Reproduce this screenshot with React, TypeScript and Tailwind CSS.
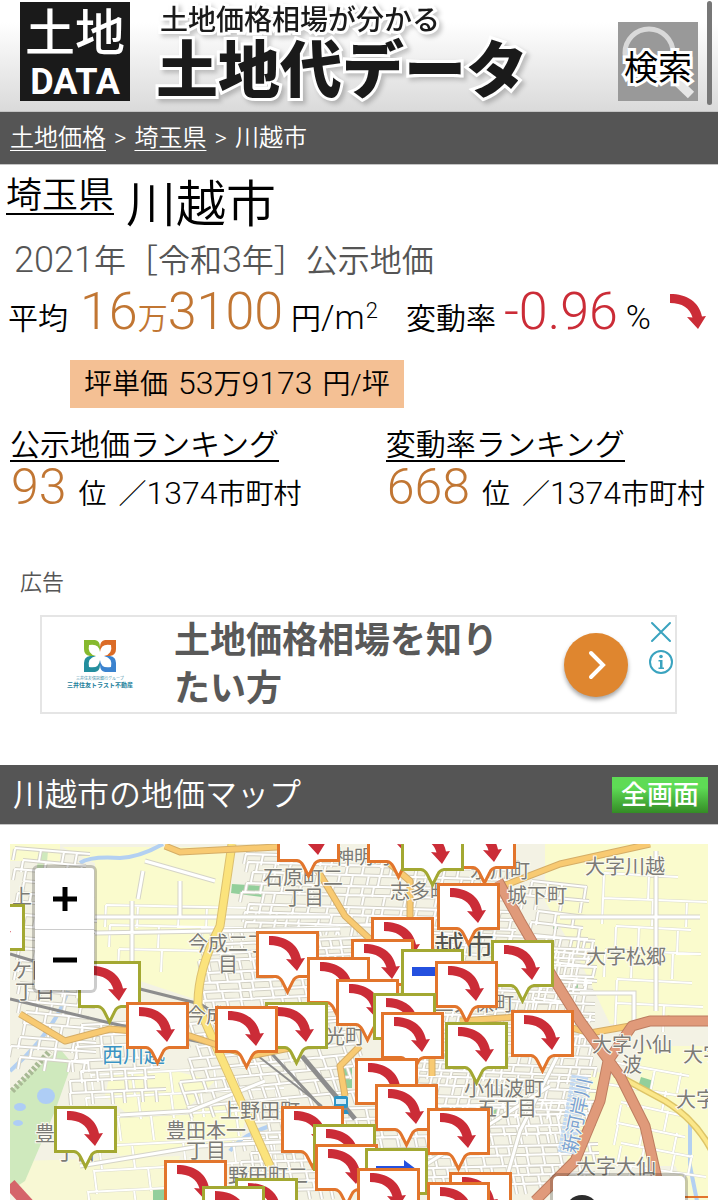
import React from "react";

type MarkerKind = "down" | "flat" | "up";
type Marker = { x: number; y: number; tone: "orange" | "green"; kind?: MarkerKind };

const MAP_X = 10;
const MAP_Y = 843;

const markers: Marker[] = [
  { x: 277, y: 814, tone: "orange" },
  { x: 367, y: 815, tone: "orange" },
  { x: 453, y: 821, tone: "orange" },
  { x: 401, y: 823, tone: "green" },
  { x: 437, y: 882, tone: "orange" },
  { x: -38, y: 903, tone: "green" },
  { x: 371, y: 916, tone: "orange" },
  { x: 256, y: 930, tone: "orange" },
  { x: 351, y: 938, tone: "orange" },
  { x: 491, y: 939, tone: "green" },
  { x: 401, y: 948, tone: "green", kind: "flat" },
  { x: 307, y: 956, tone: "orange" },
  { x: 78, y: 960, tone: "green" },
  { x: 435, y: 960, tone: "orange" },
  { x: 336, y: 978, tone: "orange" },
  { x: 373, y: 992, tone: "green" },
  { x: 265, y: 1001, tone: "green" },
  { x: 126, y: 1001, tone: "orange" },
  { x: 215, y: 1005, tone: "orange" },
  { x: 511, y: 1009, tone: "orange" },
  { x: 381, y: 1011, tone: "orange" },
  { x: 445, y: 1021, tone: "green" },
  { x: 355, y: 1057, tone: "orange" },
  { x: 375, y: 1083, tone: "orange" },
  { x: 54, y: 1105, tone: "green" },
  { x: 281, y: 1105, tone: "orange" },
  { x: 427, y: 1107, tone: "orange" },
  { x: 313, y: 1123, tone: "green" },
  { x: 315, y: 1143, tone: "orange" },
  { x: 365, y: 1147, tone: "green", kind: "up" },
  { x: 164, y: 1159, tone: "orange" },
  { x: 357, y: 1167, tone: "orange" },
  { x: 449, y: 1171, tone: "orange" },
  { x: 235, y: 1177, tone: "green" },
  { x: 427, y: 1181, tone: "orange" },
  { x: 202, y: 1185, tone: "green" },
];

const ARROW = "M0 0C17 0 29 8 32 22.5L36 22L28 35L17 23L22.5 23.5C20 14 12 9 0 9Z";

function DownArrow({ className }: { className: string }) {
  return (
    <svg viewBox="0 0 36 35" className={className} aria-hidden="true">
      <path d={ARROW} fill="#cb2c37" />
    </svg>
  );
}

function Pin({ marker }: { marker: Marker }) {
  const kind = marker.kind ?? "down";
  return (
    <button
      type="button"
      aria-label="地価地点"
      className="absolute block h-16 w-16 cursor-pointer"
      style={{ left: marker.x - MAP_X, top: marker.y - MAP_Y }}
    >
      <svg viewBox="0 0 64 64" className="block h-16 w-16">
        <path
          d="M1.5 1.5H61.5V45.5H43Q38.500 46 36.500 51L31.500 61L26.500 51Q24 46 20 45.500H1.500Z"
          fill="#fff"
          stroke={marker.tone === "orange" ? "#e2752c" : "#a3a832"}
          strokeWidth="3"
        />
        {kind === "down" && <path d={ARROW} transform="translate(13 5)" fill="#cb2c37" />}
        {kind === "flat" && <rect x="11" y="18" width="40" height="9" fill="#2450df" />}
        {kind === "up" && <path d="M11 18H39V12L51 21L39 30V25H11Z" fill="#2450df" />}
      </svg>
    </button>
  );
}

/* Street grid: rows of short blocks, slightly skewed per district. */
function streets(x0: number, y0: number, x1: number, y1: number, dx: number, dy: number, skew: number, seed: number) {
  let d = "";
  let s = seed;
  const rnd = () => {
    s = (s * 9301 + 49297) % 233280;
    return s / 233280;
  };
  for (let y = y0; y < y1; y += dy) {
    const a = x0 + rnd() * dx;
    const b = x1 - rnd() * dx;
    const t = y + rnd() * 4;
    d += `M${a.toFixed(0)} ${t.toFixed(0)}L${b.toFixed(0)} ${(t + skew).toFixed(0)}`;
    for (let x = a; x < b; x += dx * (0.6 + rnd() * 0.9)) {
      const o = ((x - x0) / (x1 - x0)) * skew;
      d += `M${x.toFixed(0)} ${(t + o).toFixed(0)}l${(-skew * 0.25).toFixed(0)} ${dy}`;
    }
  }
  return d;
}

const fieldStreets = [
  streets(95, 900, 260, 965, 34, 22, 3, 3),
  streets(70, 1070, 300, 1200, 40, 24, -10, 8),
  streets(590, 870, 708, 1010, 34, 26, 4, 5),
  streets(600, 1060, 708, 1180, 26, 20, 14, 6),
].join("");

const townStreets = [
  streets(10, 846, 100, 1060, 18, 11, 6, 1),
  streets(195, 930, 400, 1030, 15, 10, -9, 2),
  streets(240, 850, 520, 930, 15, 10, 8, 4),
  streets(180, 1020, 360, 1110, 17, 12, -16, 9),
  streets(240, 1110, 600, 1200, 13, 10, -9, 7),
  streets(400, 930, 600, 1110, 13, 9, 7, 11),
  streets(520, 880, 600, 1030, 18, 13, 6, 12),
  streets(70, 1020, 170, 1100, 17, 12, -4, 13),
].join("");

const labels: { x: number; y: number; t: string; s?: number }[] = [
  { x: 335, y: 863, t: "神明町", s: 19 },
  { x: 263, y: 884, t: "石原町二" },
  { x: 284, y: 904, t: "丁目" },
  { x: 390, y: 898, t: "志多町" },
  { x: 470, y: 877, t: "氷川町" },
  { x: 507, y: 902, t: "城下町" },
  { x: 585, y: 873, t: "大字川越" },
  { x: 586, y: 963, t: "大字松郷" },
  { x: 188, y: 950, t: "今成二丁" },
  { x: 218, y: 971, t: "目" },
  { x: 12, y: 903, t: "上" },
  { x: 12, y: 977, t: "ケ関" },
  { x: 15, y: 998, t: "丁目" },
  { x: 186, y: 1022, t: "今成" },
  { x: 325, y: 1043, t: "光町" },
  { x: 220, y: 1117, t: "上野田町" },
  { x: 166, y: 1137, t: "豊田本一" },
  { x: 186, y: 1157, t: "丁目" },
  { x: 35, y: 1140, t: "豊田" },
  { x: 56, y: 1159, t: "丁目" },
  { x: 228, y: 1182, t: "野田町二" },
  { x: 434, y: 1010, t: "三久保町" },
  { x: 464, y: 1095, t: "小仙波町" },
  { x: 477, y: 1115, t: "五丁目" },
  { x: 592, y: 1051, t: "大字小仙" },
  { x: 622, y: 1071, t: "波" },
  { x: 683, y: 1061, t: "大字" },
  { x: 676, y: 1106, t: "大字" },
  { x: 576, y: 1173, t: "大字大仙" },
];

function MapTiles() {
  return (
    <svg
      viewBox="10 843 698 357"
      preserveAspectRatio="xMinYMin slice"
      className="absolute inset-0 h-full w-full"
      aria-hidden="true"
    >
      <rect x="10" y="843" width="698" height="357" fill="#f3f2e4" />
      {/* fields */}
      <g fill="#fafbcd">
        <path d="M62 846H235L215 930H95V862Z" />
        <path d="M95 932H215L200 1000L95 965Z" />
        <path d="M110 1073L175 1070L215 1080L180 1115H130L105 1095Z" />
        <path d="M90 1115L250 1100L240 1140L120 1155Z" />
        <path d="M20 1160L180 1155L170 1200H20Z" opacity=".7" />
        <path d="M545 843H708V1023H610L580 960L545 900Z" />
        <path d="M640 1045H708V1200H690L640 1080Z" />
        <path d="M592 1070L640 1080L680 1165H565Z" />
        <path d="M10 843H60V860H10Z" />
      </g>
      {/* parks and water */}
      <g fill="#cfe9bd">
        <path d="M10 1090L60 1048L72 1062L55 1110L25 1180L10 1190Z" />
        <path d="M40 850L48 850L46 872L36 870Z" />
      </g>
      <g fill="#93cf9b">
        <path d="M232 883L264 885L262 896L231 892Z" />
        <path d="M641 1076L654 1080L650 1090L638 1086Z" />
        <path d="M573 978h5v10h-5zM343 1066h9v21h-9zM153 1187h12v13h-12zM492 1110l8-4v14l-9 2zM553 923h5v5h-5z" />
      </g>
      <g fill="#aecdf5">
        <ellipse cx="46" cy="1095" rx="9" ry="8" />
        <ellipse cx="20" cy="1106" rx="6" ry="4" />
        <ellipse cx="18" cy="1122" rx="5" ry="3" />
      </g>
      <path d="M12 1090L32 1070L50 1050" stroke="#a9ba95" strokeWidth="6" strokeDasharray="3 2" fill="none" />
      <path d="M80 862Q90 855 120 857Q140 856 163 843M68 990Q55 1030 10 1070M230 1150Q240 1135 270 1125M690 1120V1165L697 1200" stroke="#b3d0f2" strokeWidth="4" fill="none" />
      {/* minor streets */}
      <path d={fieldStreets} stroke="#dcdccb" strokeWidth="3" fill="none" />
      <path d={fieldStreets} stroke="#fff" strokeWidth="2" fill="none" />
      <path d={townStreets} stroke="#d3d1c5" strokeWidth="4" fill="none" />
      <path d={townStreets} stroke="#fff" strokeWidth="2" fill="none" />
      <g stroke="#d5d4c8" strokeWidth="5" fill="none">
        <path d="M95 916H330M95 932L340 928M132 900V965M143 870L138 898M145 860L215 880M180 880V915M560 916H700M656 850V1010M580 992H634V1023M120 1114L190 1110L265 1080M80 1165L200 1145L300 1140M500 1200L520 1130L560 1050M400 1180L550 1085" />
      </g>
      <g stroke="#fff" strokeWidth="3" fill="none">
        <path d="M95 916H330M95 932L340 928M132 900V965M143 870L138 898M145 860L215 880M180 880V915M560 916H700M656 850V1010M580 992H634V1023M120 1114L190 1110L265 1080M80 1165L200 1145L300 1140M500 1200L520 1130L560 1050M400 1180L550 1085" />
      </g>
      {/* railways */}
      <g stroke="#8d8d8d" fill="none">
        <path d="M10 953L40 962M120 983L200 1003L260 1040L320 1105" strokeWidth="3" />
        <path d="M10 998L110 1022L205 1042" strokeWidth="3" />
        <path d="M302 1055L355 1118" strokeWidth="5" />
        <path d="M258 1055L322 1105" strokeWidth="2" />
      </g>
      {/* yellow and orange roads */}
      <g fill="none" strokeLinejoin="round">
        <path d="M232 843L220 925Q197 970 198 1005L225 1065L270 1165" stroke="#dcc070" strokeWidth="9" />
        <path d="M232 843L220 925Q197 970 198 1005L225 1065L270 1165" stroke="#fbe37c" strokeWidth="7" />
        <path d="M20 1013L65 1040L110 1028L190 1035L250 1055L300 1045M165 845L180 851L277 846M318 870L345 915L372 940M375 850L410 880V935M495 888L560 863L650 843M345 1095L340 1065L360 1045M432 1075V1050M460 1020L530 1015L590 1032L670 1018" stroke="#d5ad66" strokeWidth="7" />
        <path d="M20 1013L65 1040L110 1028L190 1035L250 1055L300 1045M165 845L180 851L277 846M318 870L345 915L372 940M375 850L410 880V935M495 888L560 863L650 843M345 1095L340 1065L360 1045M432 1075V1050M460 1020L530 1015L590 1032L670 1018" stroke="#f8ca72" strokeWidth="5" />
        <path d="M615 1073L665 1100Q695 1118 712 1150" stroke="#ddc467" strokeWidth="7" />
        <path d="M615 1073L665 1100Q695 1118 712 1150" stroke="#fbe789" strokeWidth="4" />
      </g>
      {/* trunk roads */}
      <g fill="none" strokeLinejoin="round">
        <path d="M498 880L520 920L555 980L580 1020L620 1075L645 1125L662 1200M535 1200L575 1160L600 1100L608 1060L632 1025L650 1020H708" stroke="#bd7d60" strokeWidth="11" />
        <path d="M498 880L520 920L555 980L580 1020L620 1075L645 1125L662 1200M535 1200L575 1160L600 1100L608 1060L632 1025L650 1020H708" stroke="#e09a7a" strokeWidth="9" />
        <path d="M10 1183L30 1205" stroke="#d5646a" strokeWidth="12" />
        <path d="M680 1196H708" stroke="#e2752c" strokeWidth="2" />
      </g>
      {/* river */}
      <path d="M580 1075L566 1152" stroke="#c3d9f2" strokeWidth="17" strokeDasharray="3 1" />
      <g
        fontFamily="'Noto Sans CJK JP', sans-serif"
        fontWeight="400"
        fill="#7b7b76"
        stroke="#fbfaf0"
        strokeWidth="2"
        paintOrder="stroke"
      >
        {labels.map((l) => (
          <text key={`${l.x}-${l.y}`} x={l.x} y={l.y} fontSize={l.s ?? 20}>
            {l.t}
          </text>
        ))}
        <text x="404" y="956" fontSize="30" fill="#55554f">川越市</text>
        <text x="102" y="1061" fontSize="21" fill="#3a93c4">西川越</text>
        <text transform="translate(576 1153) rotate(-78)" fontSize="19" fill="#7ba3d3">新河岸川</text>
      </g>
      <g fill="#2e94c5">
        <rect x="334" y="1095" width="14" height="12" rx="2" />
        <path d="M335 1109h12l2 4h-16z" />
      </g>
      <rect x="336" y="1098" width="10" height="5" fill="#d5edf7" />
    </svg>
  );
}

function AdLogo() {
  return (
    <svg viewBox="0 0 32 32" className="h-8 w-8" aria-hidden="true">
      <path d="M0 0H11Q16 1 16 7V16H6Q0 15 0 9Z" fill="#86b92e" />
      <path d="M32 0H21Q16 1 16 7V16H26Q32 15 32 9Z" fill="#db6b26" />
      <path d="M0 32H11Q16 31 16 25V16H6Q0 17 0 23Z" fill="#238e9e" />
      <path d="M32 32H21Q16 31 16 25V16H26Q32 17 32 23Z" fill="#3b83cf" />
      <path
        d="M5 5Q15 3 16 12Q17 3 27 5Q29 14 20 16Q29 18 27 27Q17 29 16 20Q15 29 5 27Q3 18 12 16Q3 14 5 5Z"
        fill="#fff"
      />
    </svg>
  );
}

function Ranking({ title, rank }: { title: string; rank: string }) {
  return (
    <div>
      <a href="#ranking" className="inline-block border-b-2 border-black pt-[2px] text-[30px] leading-[30px]">
        {title}
      </a>
      <p className="flex items-baseline pl-px text-[28px] leading-[50px] whitespace-nowrap">
        <span className="text-[50px] text-[#c17633]">{rank}</span>
        <span className="ml-3">位</span>
        <span className="ml-3">
          ／<span className="text-[32px]">1374</span>市町村
        </span>
      </p>
    </div>
  );
}

export default function App() {
  return (
    <div
      lang="ja"
      className="relative min-h-screen bg-white font-[Roboto,'Noto_Sans_CJK_JP',sans-serif] font-[350] text-black"
    >
      <header className="flex h-[111px] items-start bg-linear-to-b from-white from-20% to-[#dadada] px-5">
        <a
          href="#top"
          className="mt-[2px] flex h-[99px] w-[110px] shrink-0 flex-col items-center overflow-hidden bg-[#1a1a1a] text-white"
        >
          <span className="text-[50px] leading-[64px] font-medium">土地</span>
          <span className="text-[36px] leading-[32px] font-bold">DATA</span>
        </a>
        <div className="ml-[26px] flex flex-col pt-px whitespace-nowrap text-[#1a1a1a] drop-shadow-[3px_3px_2px_rgba(0,0,0,0.2)] [paint-order:stroke_fill] [-webkit-text-stroke:6px_white]">
          <span className="pl-1 text-[28px] leading-[40px] font-medium">土地価格相場が分かる</span>
          <span className="text-[62px] leading-[62px] font-black">土地代データ</span>
        </div>
        <button
          type="button"
          className="relative mt-[22px] ml-auto h-[79px] w-20 shrink-0 bg-[#999] text-[34px] leading-[79px] font-normal whitespace-nowrap"
        >
          <svg viewBox="0 0 80 79" className="absolute inset-0 h-full w-full" aria-hidden="true">
            <circle cx="31" cy="31" r="24" fill="none" stroke="#d9d9d9" strokeWidth="5" />
            <path d="M49 50L73 73" stroke="#e6e6e6" strokeWidth="9" />
          </svg>
          <span className="relative flex justify-center pt-2 leading-[76px] [paint-order:stroke_fill] [-webkit-text-stroke:6px_white]">
            検索
          </span>
        </button>
      </header>
      <div className="absolute top-px right-[6px] h-26 w-[5px] rounded-full bg-[#777]" />

      <nav className="flex h-[54px] items-center gap-2 border-y border-[#c4c4c4] bg-[#555] px-[10px] pb-px text-2xl text-white">
        <a href="#price" className="underline decoration-1 underline-offset-4">土地価格</a>
        <span>&gt;</span>
        <a href="#saitama" className="underline decoration-1 underline-offset-4">埼玉県</a>
        <span>&gt;</span>
        <span>川越市</span>
      </nav>

      <main>
        <h1 className="flex items-start pt-3 pl-[6px]">
          <a href="#saitama" className="border-b-2 border-black pt-[2px] text-4xl leading-[34px]">埼玉県</a>
          <span className="ml-3 text-[50px] leading-[56px]">川越市</span>
        </h1>
        <p className="pt-[5px] pl-[14px] text-[32px] leading-[44px] text-[#555]">
          <span className="text-[36px]">2021</span>年［令和<span className="text-[36px]">3</span>年］公示地価
        </p>

        <div className="flex items-baseline pl-2 text-[30px] leading-[58px] whitespace-nowrap">
          <span>平均</span>
          <span className="ml-3 text-[52px] text-[#c17633]">
            16<span className="text-[30px]">万</span>3100
          </span>
          <span className="ml-2">
            円<span className="text-[34px]">/m</span>
            <sup className="ml-px text-[22px] leading-none">2</sup>
          </span>
          <span className="ml-7">変動率</span>
          <span className="ml-2 text-[52px] text-[#cb2c37]">-0.96</span>
          <span className="ml-2 text-[34px]">%</span>
          <DownArrow className="mr-3 ml-auto h-[35px] w-9" />
        </div>

        <p className="mt-3 ml-[70px] flex w-fit items-baseline gap-[10px] bg-[#f4c094] px-[14px] text-[28px] leading-[47px] whitespace-nowrap">
          <span>坪単価</span>
          <span>
            <span className="text-[32px]">53</span>万<span className="text-[32px]">9173</span>
          </span>
          <span>円/坪</span>
        </p>

        <div className="mt-[20px] flex items-start justify-between pr-[13px] pl-[10px]">
          <Ranking title="公示地価ランキング" rank="93" />
          <Ranking title="変動率ランキング" rank="668" />
        </div>

        <p className="mt-[47px] pl-5 text-[22px] leading-[32px] text-[#555]">広告</p>

        <section className="relative mt-4 mr-[41px] ml-10 flex h-[99px] items-center border-2 border-[#e5e5e5] bg-white">
          <div className="flex w-[116px] shrink-0 flex-col items-center text-[#23819c]">
            <AdLogo />
            <span className="mt-1 text-[4px] leading-[5px] whitespace-nowrap">三井住友信託銀行グループ</span>
            <span className="text-[6px] leading-[8px] font-bold whitespace-nowrap">三井住友トラスト不動産</span>
          </div>
          <p className="ml-4 w-[340px] text-[36px] leading-[48px] font-bold text-[#595959]">土地価格相場を知りたい方</p>
          <button
            type="button"
            aria-label="広告を開く"
            className="mr-[47px] ml-auto flex h-16 w-16 shrink-0 items-center justify-center rounded-full bg-[#df862f] shadow-[0_3px_4px_rgba(0,0,0,0.35)]"
          >
            <svg viewBox="0 0 64 64" className="h-16 w-16" aria-hidden="true">
              <path d="M27 20L39 32L27 44" fill="none" stroke="#fff" strokeWidth="4" strokeLinecap="round" />
            </svg>
          </button>
          <div className="absolute top-[2px] right-px flex flex-col items-center gap-1">
            <button type="button" aria-label="閉じる" className="block">
              <svg viewBox="0 0 26 26" className="h-[26px] w-[26px]">
                <path d="M4 4L22 22M22 4L4 22" stroke="#3aa3bf" strokeWidth="2" strokeLinecap="round" />
              </svg>
            </button>
            <button type="button" aria-label="広告情報" className="block">
              <svg viewBox="0 0 26 26" className="h-[26px] w-[26px]">
                <circle cx="13" cy="13" r="11" fill="none" stroke="#3aa3bf" strokeWidth="2" />
                <circle cx="13" cy="7.500" r="1.800" fill="#3aa3bf" />
                <path d="M10.500 11H14.500V18.500H16V20H10.500V18.500H12V12.500H10.500Z" fill="#3aa3bf" />
              </svg>
            </button>
          </div>
        </section>

        <div className="mt-[51px] flex h-[60px] items-center justify-between border-b border-[#c4c4c4] bg-[#555] pr-[10px] pl-[13px]">
          <h2 className="text-[32px] leading-[44px] text-white">川越市の地価マップ</h2>
          <button
            type="button"
            className="h-9 w-24 bg-linear-to-b from-[#5edb55] from-30% to-[#348c25] text-[26px] leading-[36px] font-medium whitespace-nowrap text-white"
          >
            全画面
          </button>
        </div>

        <section className="relative mx-[10px] mt-[19px] h-[357px] overflow-hidden">
          <MapTiles />
          {markers.map((m) => (
            <Pin key={`${m.x}-${m.y}`} marker={m} />
          ))}
          <div className="absolute top-[21px] left-[22px] flex w-[65px] flex-col overflow-hidden rounded-md border-3 border-black/20 bg-white bg-clip-padding">
            <button type="button" aria-label="拡大" className="flex h-[62px] items-center justify-center border-b border-[#ccc]">
              <svg viewBox="0 0 24 24" className="h-6 w-6">
                <path d="M0 12H24M12 0V24" stroke="#000" strokeWidth="5" />
              </svg>
            </button>
            <button type="button" aria-label="縮小" className="flex h-[60px] items-center justify-center">
              <svg viewBox="0 0 24 24" className="h-6 w-6">
                <path d="M0 12H24" stroke="#000" strokeWidth="5" />
              </svg>
            </button>
          </div>
          <button
            type="button"
            aria-label="現在地"
            className="absolute right-[20px] -bottom-10 h-[68px] w-[138px] rounded-lg border-3 border-black/20 bg-white bg-clip-padding"
          >
            <svg viewBox="0 0 132 62" className="block h-[62px] w-[132px]">
              <circle cx="29" cy="36" r="17" fill="#2d2d2d" />
            </svg>
          </button>
        </section>
      </main>
    </div>
  );
}
